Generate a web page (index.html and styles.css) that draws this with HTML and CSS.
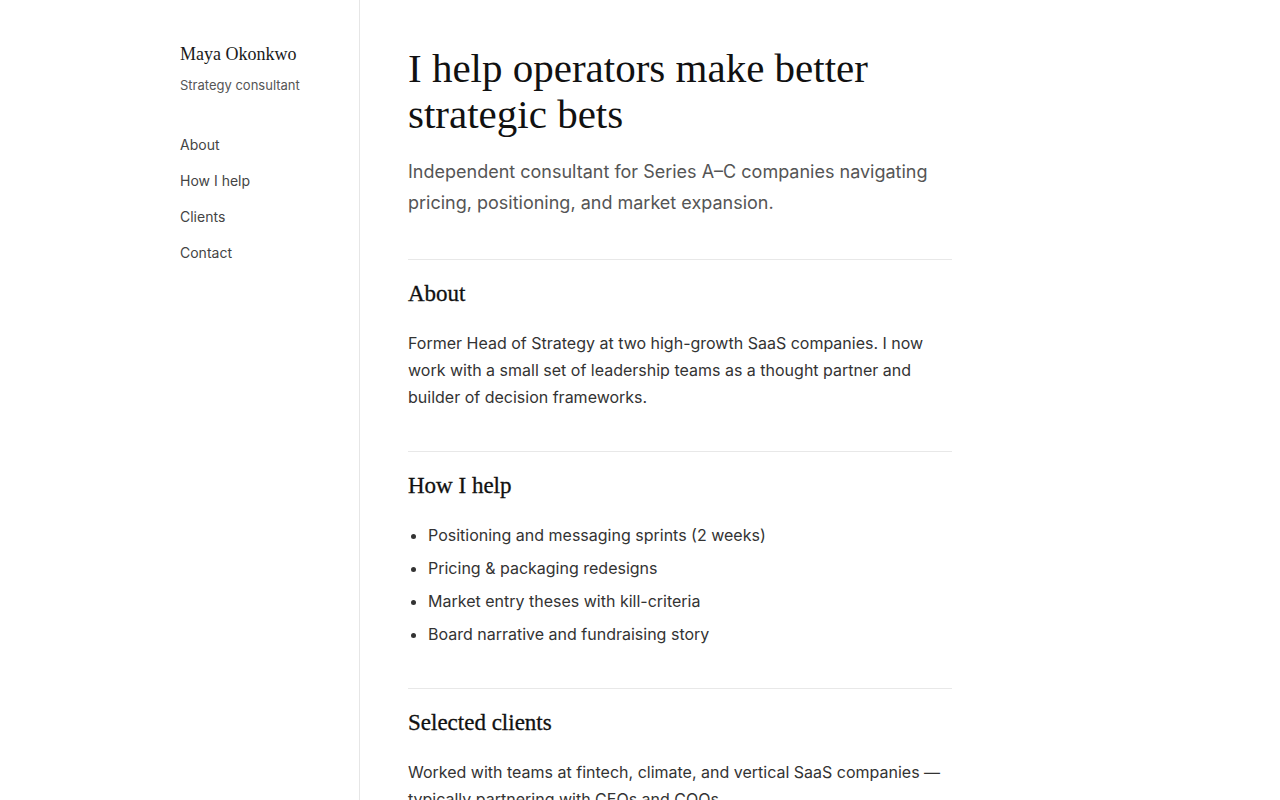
FILE: index.html
```html
<!doctype html>
<html>
<head>
<meta charset="utf-8">
<title>Maya Okonkwo — Strategy consultant</title>
<link rel="stylesheet" href="styles.css">
</head>
<body>
<div class="page">
	<aside class="side">
		<div class="brand">
			<div class="brand-name">Maya Okonkwo</div>
			<div class="brand-role">Strategy consultant</div>
		</div>
		<nav class="nav">
			<a href="#about">About</a>
			<a href="#help">How I help</a>
			<a href="#clients">Clients</a>
			<a href="#contact">Contact</a>
		</nav>
	</aside>
	<main class="main">
		<header class="intro">
			<h1>I help operators make better strategic bets</h1>
			<p class="lead">Independent consultant for Series A–C companies navigating pricing, positioning, and market expansion.</p>
		</header>
		<section class="block" id="about">
			<h2>About</h2>
			<p>Former Head of Strategy at two high-growth SaaS companies. I now work with a small set of leadership teams as a thought partner and builder of decision frameworks.</p>
		</section>
		<section class="block" id="help">
			<h2>How I help</h2>
			<ul class="list">
				<li>Positioning and messaging sprints (2 weeks)</li>
				<li>Pricing &amp; packaging redesigns</li>
				<li>Market entry theses with kill-criteria</li>
				<li>Board narrative and fundraising story</li>
			</ul>
		</section>
		<section class="block" id="clients">
			<h2>Selected clients</h2>
			<p>Worked with teams at fintech, climate, and vertical SaaS companies — typically partnering with CEOs and COOs.</p>
		</section>
		<section class="block" id="contact">
			<h2>Contact</h2>
			<p>Taking on two new engagements per quarter.</p>
		</section>
	</main>
</div>
</body>
</html>
```

FILE: styles.css
```css
*{margin:0; padding:0; box-sizing:border-box;}
body{background:#fff; color:#333; font-family:Inter, "Noto Sans", sans-serif;}
a{text-decoration:none; color:inherit;}

.page{display:grid; grid-template-columns:360px 1fr; min-height:100vh;}

/* left column */
.side{border-right:1px solid #e6e6e6; padding:43px 40px 40px 180px;}
.brand-name{font-family:"Liberation Serif", serif; font-size:18px; line-height:22px; color:#1a1a1a;}
.brand-role{font-size:13px; line-height:18px; color:#555; margin-top:11px;}
.nav{display:flex; flex-direction:column; gap:16px; margin-top:41px;}
.nav a{font-size:14px; line-height:20px; color:#444;}

/* content column */
.main{padding:45px 48px 60px 48px; width:640px;}
.intro{padding-bottom:1px;}
.intro h1{font-family:"Liberation Serif", serif; font-weight:400; font-size:41px; line-height:46px; color:#111;}
.lead{font-size:18px; line-height:31px; color:#555; margin-top:19px;}

.block{border-top:1px solid #e8e8e8; margin-top:40px; padding-top:20px;}
.block h2{font-family:"Liberation Serif", serif; font-weight:400; font-size:23px; line-height:28px; color:#111; -webkit-text-stroke:0.3px #111;}
.block p{font-size:16px; line-height:27px; color:#333; margin-top:22px;}
.list{margin-top:22px; padding-left:20px;}
.list li{font-size:16px; line-height:27px; color:#333; margin-bottom:6px;}
.list li:last-child{margin-bottom:0;}
```
